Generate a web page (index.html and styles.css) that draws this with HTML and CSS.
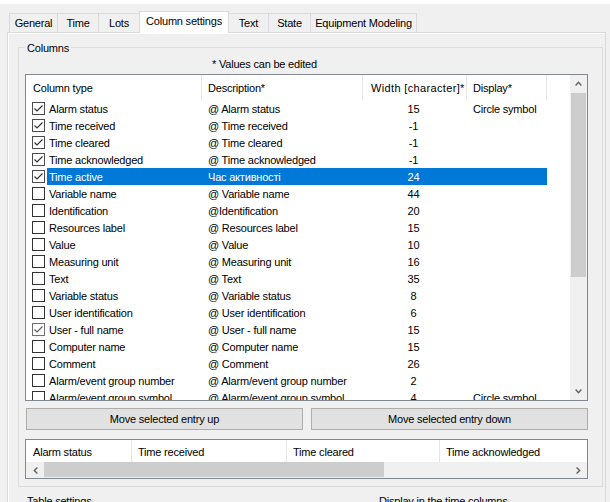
FILE: index.html
```html
<!DOCTYPE html>
<html>
<head>
<meta charset="utf-8">
<title>Column settings</title>
<link rel="stylesheet" href="styles.css">
</head>
<body>
<div class="topband"></div>
<div class="tabstrip">
  <div class="tab w-general">General</div>
  <div class="tab w-time">Time</div>
  <div class="tab w-lots">Lots</div>
  <div class="tab tab-active w-cols">Column settings</div>
  <div class="tab w-text">Text</div>
  <div class="tab w-state">State</div>
  <div class="tab w-equip">Equipment Modeling</div>
</div>
<div class="panel">
  <div class="group">
    <div class="legend">Columns</div>
    <div class="note">* Values can be edited</div>
    <div class="list">
      <div class="list-main">
        <div class="hdr">
          <div class="hc c1">Column type</div>
          <div class="hc c2">Description*</div>
          <div class="hc c3">Width [character]*</div>
          <div class="hc c4">Display*</div>
          <div class="hc c5"></div>
        </div>
        <div class="rows">
          <div class="row">
            <div class="cbcell"><svg class="cb" width="13" height="13" viewBox="0 0 13 13"><rect x="0.5" y="0.5" width="12" height="12"/><path d="M2.5 6.5 L5 9 L10.5 3.5"/></svg></div>
            <div class="rowdata"><div class="rc r1">Alarm status</div><div class="rc r2">@ Alarm status</div><div class="rc r3">15</div><div class="rc r4">Circle symbol</div></div>
          </div>
          <div class="row">
            <div class="cbcell"><svg class="cb" width="13" height="13" viewBox="0 0 13 13"><rect x="0.5" y="0.5" width="12" height="12"/><path d="M2.5 6.5 L5 9 L10.5 3.5"/></svg></div>
            <div class="rowdata"><div class="rc r1">Time received</div><div class="rc r2">@ Time received</div><div class="rc r3">-1</div><div class="rc r4"></div></div>
          </div>
          <div class="row">
            <div class="cbcell"><svg class="cb" width="13" height="13" viewBox="0 0 13 13"><rect x="0.5" y="0.5" width="12" height="12"/><path d="M2.5 6.5 L5 9 L10.5 3.5"/></svg></div>
            <div class="rowdata"><div class="rc r1">Time cleared</div><div class="rc r2">@ Time cleared</div><div class="rc r3">-1</div><div class="rc r4"></div></div>
          </div>
          <div class="row">
            <div class="cbcell"><svg class="cb" width="13" height="13" viewBox="0 0 13 13"><rect x="0.5" y="0.5" width="12" height="12"/><path d="M2.5 6.5 L5 9 L10.5 3.5"/></svg></div>
            <div class="rowdata"><div class="rc r1">Time acknowledged</div><div class="rc r2">@ Time acknowledged</div><div class="rc r3">-1</div><div class="rc r4"></div></div>
          </div>
          <div class="row sel">
            <div class="cbcell"><svg class="cb" width="13" height="13" viewBox="0 0 13 13"><rect x="0.5" y="0.5" width="12" height="12"/><path d="M2.5 6.5 L5 9 L10.5 3.5"/></svg></div>
            <div class="rowdata"><div class="rc r1">Time active</div><div class="rc r2">Час активності</div><div class="rc r3">24</div><div class="rc r4"></div></div>
          </div>
          <div class="row">
            <div class="cbcell"><svg class="cb off" width="13" height="13" viewBox="0 0 13 13"><rect x="0.5" y="0.5" width="12" height="12"/></svg></div>
            <div class="rowdata"><div class="rc r1">Variable name</div><div class="rc r2">@ Variable name</div><div class="rc r3">44</div><div class="rc r4"></div></div>
          </div>
          <div class="row">
            <div class="cbcell"><svg class="cb off" width="13" height="13" viewBox="0 0 13 13"><rect x="0.5" y="0.5" width="12" height="12"/></svg></div>
            <div class="rowdata"><div class="rc r1">Identification</div><div class="rc r2">@Identification</div><div class="rc r3">20</div><div class="rc r4"></div></div>
          </div>
          <div class="row">
            <div class="cbcell"><svg class="cb off" width="13" height="13" viewBox="0 0 13 13"><rect x="0.5" y="0.5" width="12" height="12"/></svg></div>
            <div class="rowdata"><div class="rc r1">Resources label</div><div class="rc r2">@ Resources label</div><div class="rc r3">15</div><div class="rc r4"></div></div>
          </div>
          <div class="row">
            <div class="cbcell"><svg class="cb off" width="13" height="13" viewBox="0 0 13 13"><rect x="0.5" y="0.5" width="12" height="12"/></svg></div>
            <div class="rowdata"><div class="rc r1">Value</div><div class="rc r2">@ Value</div><div class="rc r3">10</div><div class="rc r4"></div></div>
          </div>
          <div class="row">
            <div class="cbcell"><svg class="cb off" width="13" height="13" viewBox="0 0 13 13"><rect x="0.5" y="0.5" width="12" height="12"/></svg></div>
            <div class="rowdata"><div class="rc r1">Measuring unit</div><div class="rc r2">@ Measuring unit</div><div class="rc r3">16</div><div class="rc r4"></div></div>
          </div>
          <div class="row">
            <div class="cbcell"><svg class="cb off" width="13" height="13" viewBox="0 0 13 13"><rect x="0.5" y="0.5" width="12" height="12"/></svg></div>
            <div class="rowdata"><div class="rc r1">Text</div><div class="rc r2">@ Text</div><div class="rc r3">35</div><div class="rc r4"></div></div>
          </div>
          <div class="row">
            <div class="cbcell"><svg class="cb off" width="13" height="13" viewBox="0 0 13 13"><rect x="0.5" y="0.5" width="12" height="12"/></svg></div>
            <div class="rowdata"><div class="rc r1">Variable status</div><div class="rc r2">@ Variable status</div><div class="rc r3">8</div><div class="rc r4"></div></div>
          </div>
          <div class="row">
            <div class="cbcell"><svg class="cb off" width="13" height="13" viewBox="0 0 13 13"><rect x="0.5" y="0.5" width="12" height="12"/></svg></div>
            <div class="rowdata"><div class="rc r1">User identification</div><div class="rc r2">@ User identification</div><div class="rc r3">6</div><div class="rc r4"></div></div>
          </div>
          <div class="row">
            <div class="cbcell"><svg class="cb light" width="13" height="13" viewBox="0 0 13 13"><rect x="0.5" y="0.5" width="12" height="12"/><path d="M2.5 6.5 L5 9 L10.5 3.5"/></svg></div>
            <div class="rowdata"><div class="rc r1">User - full name</div><div class="rc r2">@ User - full name</div><div class="rc r3">15</div><div class="rc r4"></div></div>
          </div>
          <div class="row">
            <div class="cbcell"><svg class="cb off" width="13" height="13" viewBox="0 0 13 13"><rect x="0.5" y="0.5" width="12" height="12"/></svg></div>
            <div class="rowdata"><div class="rc r1">Computer name</div><div class="rc r2">@ Computer name</div><div class="rc r3">15</div><div class="rc r4"></div></div>
          </div>
          <div class="row">
            <div class="cbcell"><svg class="cb off" width="13" height="13" viewBox="0 0 13 13"><rect x="0.5" y="0.5" width="12" height="12"/></svg></div>
            <div class="rowdata"><div class="rc r1">Comment</div><div class="rc r2">@ Comment</div><div class="rc r3">26</div><div class="rc r4"></div></div>
          </div>
          <div class="row">
            <div class="cbcell"><svg class="cb off" width="13" height="13" viewBox="0 0 13 13"><rect x="0.5" y="0.5" width="12" height="12"/></svg></div>
            <div class="rowdata"><div class="rc r1">Alarm/event group number</div><div class="rc r2">@ Alarm/event group number</div><div class="rc r3">2</div><div class="rc r4"></div></div>
          </div>
          <div class="row">
            <div class="cbcell"><svg class="cb off" width="13" height="13" viewBox="0 0 13 13"><rect x="0.5" y="0.5" width="12" height="12"/></svg></div>
            <div class="rowdata"><div class="rc r1">Alarm/event group symbol</div><div class="rc r2">@ Alarm/event group symbol</div><div class="rc r3">4</div><div class="rc r4">Circle symbol</div></div>
          </div>
        </div>
      </div>
      <div class="vscroll">
        <div class="sb-btn"><svg width="7" height="5" viewBox="0 0 7 5"><polyline class="chev" points="0.6,4.4 3.5,1.3 6.4,4.4"/></svg></div>
        <div class="vthumb"></div>
        <div class="sb-btn sb-down"><svg width="7" height="5" viewBox="0 0 7 5"><polyline class="chev" points="0.6,0.6 3.5,3.7 6.4,0.6"/></svg></div>
      </div>
    </div>
    <div class="btnrow">
      <div class="btn">Move selected entry up</div>
      <div class="btn">Move selected entry down</div>
    </div>
    <div class="list2">
      <div class="hdr2">
        <div class="h2c d1">Alarm status</div>
        <div class="h2c d2">Time received</div>
        <div class="h2c d3">Time cleared</div>
        <div class="h2c d4">Time acknowledged</div>
      </div>
      <div class="hscroll">
        <div class="hs-btn"><svg width="5" height="7" viewBox="0 0 5 7"><polyline class="chev" points="4.4,0.6 1.3,3.5 4.4,6.4"/></svg></div>
        <div class="hs-thumb"></div>
        <div class="hs-btn hs-right"><svg width="5" height="7" viewBox="0 0 5 7"><polyline class="chev" points="0.6,0.6 3.7,3.5 0.6,6.4"/></svg></div>
      </div>
    </div>
  </div>
  <div class="bottomrow">
    <div class="bl1">Table settings</div>
    <div class="bl2">Display in the time columns</div>
  </div>
</div>
</body>
</html>
```

FILE: styles.css
```css
html, body {
  margin: 0;
  padding: 0;
  overflow: hidden;
}

body {
  width: 610px;
  height: 502px;
  background: #f0f0f0;
  font-family: "Liberation Sans", Arial, sans-serif;
  font-size: 11px;
  letter-spacing: -0.2px;
  color: #000;
}

.topband {
  height: 4px;
  background: #fff;
}

/* Tabs */
.tabstrip {
  display: flex;
  align-items: flex-end;
  height: 28px;
  padding-left: 9px;
}

.tab {
  box-sizing: border-box;
  height: 19px;
  line-height: 19px;
  border: 1px solid #d9d9d9;
  border-bottom: none;
  margin-left: -1px;
  text-align: center;
  white-space: nowrap;
  background: #f0f0f0;
}

.tab:first-child {
  margin-left: 0;
}

.tab-active {
  height: 22px;
  line-height: 19px;
  background: #fff;
  position: relative;
  z-index: 1;
  margin-bottom: -1px;
}

.w-general { width: 49px; }
.w-time { width: 42px; }
.w-lots { width: 42px; }
.w-cols { width: 90px; }
.w-text { width: 41px; }
.w-state { width: 43px; }
.w-equip { width: 107px; }

/* Tab panel */
.panel {
  box-sizing: border-box;
  margin-left: 7px;
  width: 599px;
  height: 480px;
  border: 1px solid #d9d9d9;
  box-shadow: inset 1px 1px 0 #fff;
  padding-top: 14px;
}

.group {
  box-sizing: border-box;
  margin-left: 10px;
  width: 585px;
  border: 1px solid #dcdcdc;
  padding: 0 0 7px 6px;
}

.legend {
  width: max-content;
  margin-top: -7px;
  padding: 0 2px;
  line-height: 14px;
  background: #f0f0f0;
}

.note {
  margin-top: 2px;
  line-height: 14px;
  padding-left: 187px;
}

/* Main list */
.list {
  box-sizing: border-box;
  display: flex;
  width: 563px;
  height: 327px;
  margin-top: 3px;
  border: 1px solid #828790;
  background: #fff;
}

.list-main {
  width: 544px;
  overflow: hidden;
}

.hdr {
  display: flex;
  height: 25px;
  line-height: 26px;
}

.hc {
  box-sizing: border-box;
  border-right: 1px solid #e5e5e5;
  padding-left: 6px;
  white-space: nowrap;
  overflow: hidden;
}

.c1 { width: 176px; padding-left: 7px; }
.c2 { width: 161px; }
.c3 { width: 104px; padding-left: 8px; letter-spacing: 0.35px; }
.c4 { width: 80px; }
.c5 { flex: 1; border-right: none; }

.rows {
  height: 300px;
  overflow: hidden;
}

.row {
  display: flex;
  height: 17px;
  line-height: 18px;
}

.cbcell {
  box-sizing: border-box;
  width: 21px;
  padding: 2px 0 0 6px;
}

.cb {
  display: block;
}

.cb rect {
  fill: #fff;
  stroke: #4d4d4d;
}

.cb.off rect {
  stroke: #333;
}

.cb path {
  fill: none;
  stroke: #333;
  stroke-width: 1.2;
}

.cb.light rect {
  stroke: #707070;
}

.cb.light path {
  stroke: #606060;
}

.rowdata {
  display: flex;
  width: 500px;
}

.row.sel .rowdata {
  background: #0078d7;
  color: #fff;
}

.rc {
  box-sizing: border-box;
  white-space: nowrap;
  overflow: hidden;
}

.r1 { width: 155px; padding-left: 2px; }
.r2 { width: 161px; padding-left: 6px; }
.r3 { width: 104px; text-align: center; padding-right: 3px; }
.r4 { width: 80px; padding-left: 6px; }

/* Vertical scrollbar */
.vscroll {
  display: flex;
  flex-direction: column;
  width: 17px;
  background: #f0f0f0;
}

.sb-btn {
  display: flex;
  align-items: center;
  justify-content: center;
  height: 17px;
  flex: none;
}

.sb-down {
  margin-top: auto;
}

.vthumb {
  width: 15px;
  height: 184px;
  margin: 1px 0 0 1px;
  background: #cdcdcd;
}

.chev {
  fill: none;
  stroke: #606060;
  stroke-width: 1.4;
}

/* Buttons */
.btnrow {
  display: flex;
  gap: 8px;
  margin: 7px 0 0 1px;
}

.btn {
  box-sizing: border-box;
  width: 277px;
  height: 22px;
  line-height: 21px;
  border: 1px solid #adadad;
  background: #e1e1e1;
  text-align: center;
}

/* Preview list */
.list2 {
  box-sizing: border-box;
  width: 563px;
  height: 40px;
  margin-top: 9px;
  border: 1px solid #828790;
  background: #fff;
}

.hdr2 {
  display: flex;
  height: 22px;
  line-height: 24px;
}

.h2c {
  box-sizing: border-box;
  border-right: 1px solid #e5e5e5;
  padding-left: 6px;
  white-space: nowrap;
}

.d1 { width: 106px; padding-left: 7px; }
.d2 { width: 155px; }
.d3 { width: 153px; }
.d4 { flex: 1; border-right: none; }

.hscroll {
  display: flex;
  height: 16px;
  background: #f0f0f0;
}

.hs-btn {
  display: flex;
  align-items: center;
  justify-content: center;
  width: 18px;
  height: 16px;
}

.hs-right {
  width: 17px;
  margin-left: auto;
}

.hs-thumb {
  width: 340px;
  height: 15px;
  background: #cdcdcd;
}

/* Lower group titles */
.bottomrow {
  display: flex;
  margin-top: 8px;
  line-height: 13px;
}

.bl1 {
  width: 352px;
  margin-left: 19px;
}
```
